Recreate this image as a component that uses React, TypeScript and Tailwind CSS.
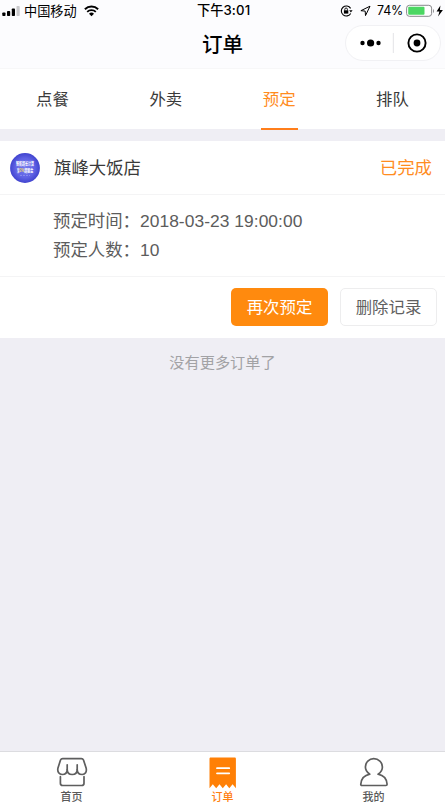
import React from 'react'
import clsx from 'clsx'

const tabs = ['点餐', '外卖', '预定', '排队']

const StatusBar = () => (
  <div className="relative flex h-[22px] items-center justify-between pl-[2px] text-black">
    <div className="flex items-center">
      <svg width="19" height="12" viewBox="0 0 19 12">
        <rect x="0.3" y="7.5" width="3.2" height="3.5" rx="0.8" />
        <rect x="5" y="6" width="3.2" height="5" rx="0.8" />
        <rect x="9.8" y="3.5" width="3.2" height="7.5" rx="0.8" />
        <rect x="14.5" y="1" width="3.2" height="10" rx="0.8" fill="#c9c9cc" />
      </svg>
      <span className="ml-[3px] pt-px text-[13.2px] leading-[20px]">中国移动</span>
      <svg className="ml-[7px]" width="15" height="12" viewBox="0 0 15 12" fill="none" stroke="#000">
        <path d="M0.9 4.2a9.6 9.6 0 0 1 13.2 0" strokeWidth="2" />
        <path d="M3.2 6.8a6.2 6.2 0 0 1 8.6 0" strokeWidth="1.8" />
        <path d="M7.5 11.2 5 8.8a3.6 3.6 0 0 1 5 0z" fill="#000" stroke="none" />
      </svg>
    </div>
    <div className="absolute top-0 left-[197px] flex h-[22px] items-center text-[13.2px] font-medium">
      <span>下午</span>
      <span className="font-['Inter'] tracking-[0.2px]">3:01</span>
    </div>
    <div className="flex items-center">
      <svg width="13" height="12" viewBox="0 0 13 12" fill="none" stroke="#000">
        <path d="M10.6 3.4A5 5 0 1 0 10.7 8.4" strokeWidth="1.1" />
        <path d="M9.2 5.2h3.4l-1.7 2.4z" fill="#000" stroke="none" />
        <rect x="3.9" y="5.3" width="4.4" height="3.3" fill="#000" stroke="none" />
        <path d="M4.8 5.5V4.3a1.3 1.3 0 0 1 2.6 0v1.2" strokeWidth="0.9" />
      </svg>
      <svg className="ml-[7px]" width="11" height="12" viewBox="0 0 11 12" fill="none" stroke="#000" strokeWidth="1">
        <path d="M10 1.2 0.9 5.7l4.3.4.3 4.5z" strokeLinejoin="round" />
      </svg>
      <span className="ml-[6px] w-[26px] font-['Inter'] text-[12.5px] tracking-[-0.2px] whitespace-nowrap">74%</span>
      <svg className="ml-[3px]" width="39" height="14" viewBox="0 0 39 14">
        <rect x="0.6" y="1.3" width="25" height="11" rx="2.8" fill="#fff" stroke="#88888c" strokeWidth="1" />
        <rect x="2.2" y="2.8" width="16.3" height="8" rx="1" fill="#4bd763" />
        <path d="M27 5v4c1.3-.6 1.3-3.4 0-4z" fill="#88888c" />
        <path d="M34.4 1.5 30.6 7.6h2.8l-1.3 4.9 4.8-6.6h-3z" />
      </svg>
    </div>
  </div>
)

const Header = () => (
  <div className="relative flex h-[47px] items-center justify-center">
    <h1 className="pb-[1px] text-[20.5px] leading-[30px] font-medium text-black">订单</h1>
    <div className="absolute top-[3px] right-[4px] flex h-[36px] w-[96px] items-center rounded-full border border-[#f1f1f4] bg-white">
      <svg width="94" height="34" viewBox="0 0 94 34">
        <circle cx="16.5" cy="17" r="2.2" />
        <circle cx="24.6" cy="17" r="3.6" />
        <circle cx="32.5" cy="17" r="2.2" />
        <path d="M47.3 7v20" stroke="#e3e3e6" strokeWidth="1" />
        <circle cx="71" cy="17" r="8.6" fill="none" stroke="#000" strokeWidth="1.9" />
        <circle cx="71" cy="17" r="3.4" />
      </svg>
    </div>
  </div>
)

const Avatar = () => (
  <svg width="30" height="30" viewBox="0 0 30 30">
    <defs>
      <radialGradient id="avatar">
        <stop offset="0" stopColor="#7478ed" />
        <stop offset="0.65" stopColor="#5f62e4" />
        <stop offset="1" stopColor="#4144cf" />
      </radialGradient>
    </defs>
    <circle cx="15" cy="15" r="14.9" fill="url(#avatar)" />
    <g fill="#fff" fontWeight="700" fontSize="3" textAnchor="middle" transform="scale(1 1.7)">
      <text x="15" y="6.8">智能超长计算</text>
      <text x="15" y="11.4">
        享<tspan fill="#f2df5a">2%</tspan>超额金
      </text>
    </g>
    <path d="M10 22.4h10" stroke="#9b9df5" strokeWidth="0.7" strokeDasharray="2 1" />
  </svg>
)

const OrderCard = () => (
  <div className="mt-[12px] h-[197px] bg-white">
    <div className="flex h-[54px] items-center border-b border-[#f4f4f5] pr-[13px] pl-[10px] text-[17.4px]">
      <Avatar />
      <span className="ml-[14px] pt-[2px] text-[#3a3a3a]">旗峰大饭店</span>
      <span className="ml-auto pt-[2px] text-[#ff8c1f]">已完成</span>
    </div>
    <div className="h-[82px] border-b border-[#f4f4f5] pt-[12px] pl-[53px] text-[17.4px] leading-[28.5px] text-[#5c5c5c]">
      <p>
        预定时间：<span className="tracking-[0.05px]">2018-03-23 19:00:00</span>
      </p>
      <p>预定人数：10</p>
    </div>
    <div className="flex justify-end gap-[12px] pt-[11px] pr-[8px] text-[16.4px]">
      <button className="h-[38px] w-[97px] rounded-[5px] bg-[#ff8a0e] text-white">再次预定</button>
      <button className="h-[38px] w-[97px] rounded-[5px] border border-[#ededee] bg-white text-[#606060]">删除记录</button>
    </div>
  </div>
)

const BottomNav = () => (
  <div className="grid h-[52px] grid-cols-[143px_159px_143px] border-t border-[#dcdce0] bg-white text-[11px] leading-[16px] font-medium text-[#5a5a5a]">
    <div className="flex flex-col items-center pt-[5px]">
      <svg width="32" height="32" viewBox="0 0 32 32" fill="none" stroke="#5e5e5e" strokeWidth="1.7" strokeLinecap="round" strokeLinejoin="round">
        <path d="M6.6 1.6h18.8c1 0 1.7.5 2.1 1.4l2.7 8.3c.7 3.7-1 6.2-4 6.2-3 0-5-2-5-5 0 3-2 5-5 5s-5-2-5-5c0 3-2 5-5 5s-5-2.5-4.3-6.2L4.5 3c.4-.9 1.1-1.4 2.1-1.4z" />
        <path d="M11.2 7.8v4.7M21.2 7.8v4.7" />
        <path d="M4.4 19.7v6.5c0 1.5.8 2.3 2.3 2.3h19c1.5 0 2.3-.8 2.3-2.3v-6.5" />
      </svg>
      <span>首页</span>
    </div>
    <div className="flex flex-col items-center pt-[5px] text-[#ff8011]">
      <svg width="28" height="32" viewBox="0 0 28 32">
        <path d="M1.8.4h23.8c.8 0 1.3.5 1.3 1.3V31.2l-3.3-4-3.3 4-3.2-4-3.3 4-3.3-4-3.3 4-3.4-4L.5 31.2V1.7C.5.9 1 .4 1.8.4z" fill="#ff8006" />
        <path d="M8 11.2h12.2M8 16.3h12.2" stroke="#fff" strokeWidth="1.8" strokeLinecap="round" />
      </svg>
      <span>订单</span>
    </div>
    <div className="flex flex-col items-center pt-[5px]">
      <svg width="30" height="32" viewBox="0 0 30 32" fill="none" stroke="#5e5e5e" strokeWidth="1.7" strokeLinejoin="round">
        <path d="M10.8 17.2C8 15.4 6.4 12.8 6.4 10c0-4.8 3.7-8.3 8.4-8.3s8.6 3.5 8.6 8.3c0 2.8-1.5 5.4-4.3 7.2 5.3 1.1 8.6 4.4 9 10 0 .8-.4 1.3-1.2 1.3H3c-.8 0-1.3-.5-1.2-1.3.4-5.6 3.7-8.9 9-10z" />
      </svg>
      <span>我的</span>
    </div>
  </div>
)

const App = () => {
  return (
    <div className="flex h-[803px] w-[445px] flex-col overflow-hidden bg-[#efeef4] font-['Liberation_Sans','Noto_Sans_CJK_SC',sans-serif]">
      <div className="h-[69px] border-b border-[#f7f7f8] bg-[#fcfcfe]">
        <StatusBar />
        <Header />
      </div>
      <div className="flex h-[60px] justify-between bg-white px-[34px]">
        {tabs.map((tab) => (
          <div
            key={tab}
            className={clsx(
              'flex h-[61px] w-[37px] items-center justify-center border-b-2 pt-[1px] text-[16.4px] whitespace-nowrap',
              tab === '预定' ? 'border-[#ff7e1b] text-[#ff8c1f]' : 'border-transparent text-[#3a3a3a]'
            )}
          >
            {tab}
          </div>
        ))}
      </div>
      <OrderCard />
      <p className="mt-[13px] text-center text-[15.2px] leading-[24px] text-[#a2a2a5]">没有更多订单了</p>
      <div className="mt-auto">
        <BottomNav />
      </div>
    </div>
  )
}

export default App
